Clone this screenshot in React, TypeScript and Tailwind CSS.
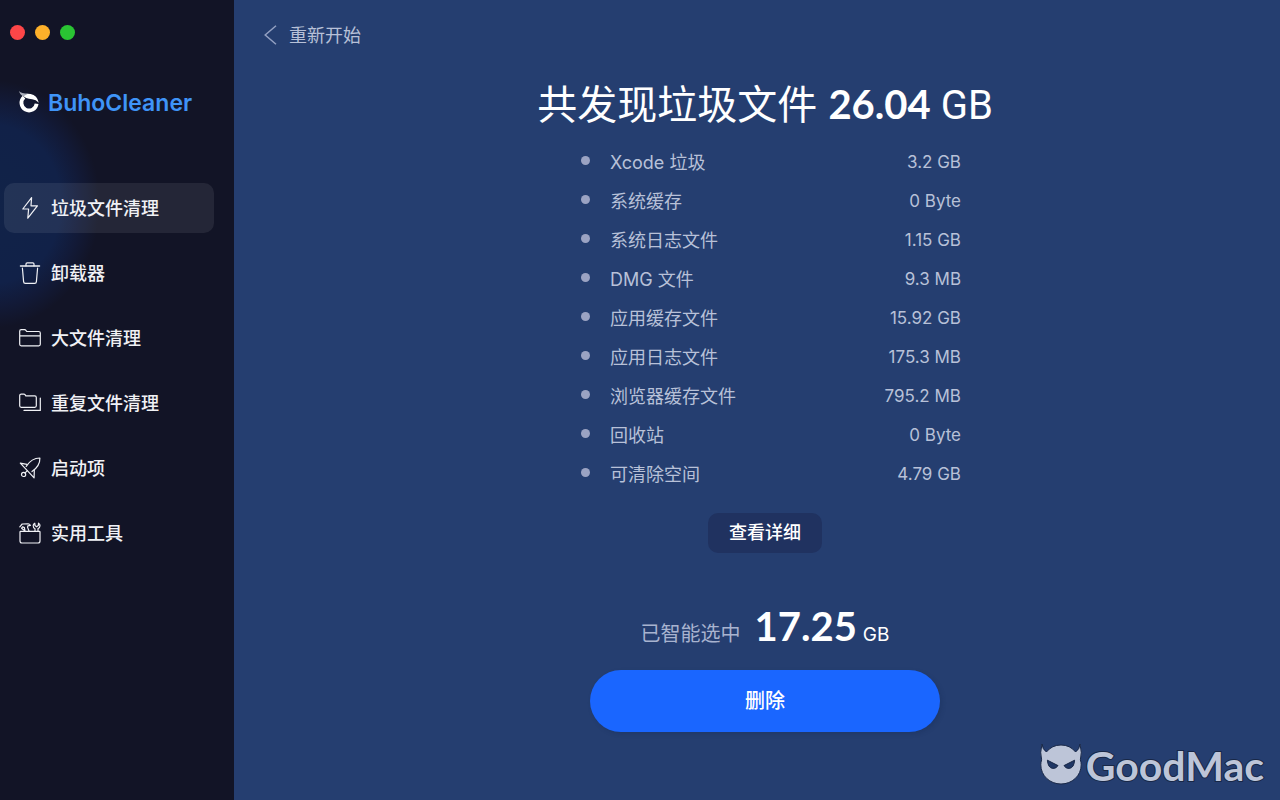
import { ReactNode } from 'react'
import { clsx } from 'clsx'

interface NavItem {
  label: string
  icon: ReactNode
}

interface JunkItem {
  name: string
  size: string
}

interface IconProps {
  children: ReactNode
}

function NavIcon({ children }: IconProps) {
  return (
    <svg
      className="w-6 h-6 shrink-0"
      viewBox="0 0 24 24"
      fill="none"
      stroke="currentColor"
      strokeWidth="1.2"
      strokeLinecap="round"
      strokeLinejoin="round"
      aria-hidden="true"
    >
      {children}
    </svg>
  )
}

const navItems: NavItem[] = [
  {
    label: '垃圾文件清理',
    icon: (
      <NavIcon>
        <path d="M13.6 1.6 4.8 13h5.8l-.8 9.200L19.400 9.800h-6.400z" />
      </NavIcon>
    )
  },
  {
    label: '卸载器',
    icon: (
      <NavIcon>
        <path d="M2.5 5h19" strokeWidth="1.5" />
        <path d="M8 4.800V3q0-1.200 1.200-1.200h5.600Q16 1.800 16 3v1.800M4.400 7l1.200 13.600q.1 1.800 1.800 1.800h9.200q1.700 0 1.800-1.800L19.600 7" />
      </NavIcon>
    )
  },
  {
    label: '大文件清理',
    icon: (
      <NavIcon>
        <path d="M1.7 18.3V5.2Q1.7 3.7 3.2 3.7h3.4q.8 0 1.3.7l.8 1.1h12.1q1.5 0 1.5 1.5v11.3q0 1.5-1.5 1.5H3.2q-1.5 0-1.5-1.5zM1.7 9.8h20.6" />
      </NavIcon>
    )
  },
  {
    label: '重复文件清理',
    icon: (
      <NavIcon>
        <path d="M1.7 14.8V4.6q0-1.5 1.5-1.5h2.6q.8 0 1.2.6l.8 1.2h9q1.5 0 1.5 1.5v8.4q0 1.5-1.5 1.5H3.2q-1.5 0-1.5-1.5zM22.3 7v12.4H6" />
      </NavIcon>
    )
  },
  {
    label: '启动项',
    icon: (
      <NavIcon>
        <path d="M8.2 10.4C11.6 5 15.6 2 21.9 2c.2 6-2.8 10-7.9 13.6" />
        <path d="M9 8.4 2.3 7.2l13.8 14.6.2-7.6" />
        <circle cx="5.6" cy="18.4" r="2.1" />
        <path d="m7.1 16.9 2.3-2.3" />
      </NavIcon>
    )
  },
  {
    label: '实用工具',
    icon: (
      <NavIcon>
        <path d="M2.7 10.3h18.6q.7 0 .7.7v9q0 2-2 2H4q-2 0-2-2v-9q0-.7.7-.7z" />
        <path d="M1.8 5.8 4.2 3l6-.2Q12 3 12.4 4.4l-2.6.4-.2 1.6 1.4 3.6M7 10 6.4 6.6 4.6 5.8l-1 1.4zM17 10V7.8q-2-1-1.8-3.4.2-1.6 1.6-2.2l.2 2.4 1.6 1.2 1.7-1.2.2-2.4q1.6.8 1.5 2.6-.1 2-2 2.8V10" />
      </NavIcon>
    )
  }
]

const junkItems: JunkItem[] = [
  { name: 'Xcode 垃圾', size: '3.2 GB' },
  { name: '系统缓存', size: '0 Byte' },
  { name: '系统日志文件', size: '1.15 GB' },
  { name: 'DMG 文件', size: '9.3 MB' },
  { name: '应用缓存文件', size: '15.92 GB' },
  { name: '应用日志文件', size: '175.3 MB' },
  { name: '浏览器缓存文件', size: '795.2 MB' },
  { name: '回收站', size: '0 Byte' },
  { name: '可清除空间', size: '4.79 GB' }
]

function WindowControls() {
  return (
    <div className="flex gap-[10px] px-[10px] pt-[25px]">
      <button type="button" aria-label="关闭" className="size-[15px] rounded-full bg-[#fd4648]" />
      <button type="button" aria-label="最小化" className="size-[15px] rounded-full bg-[#fdb02a]" />
      <button type="button" aria-label="缩放" className="size-[15px] rounded-full bg-[#2ac433]" />
    </div>
  )
}

function Brand() {
  return (
    <div className="flex items-center gap-2 pl-[18px] mt-[47px] h-8">
      <svg className="w-[22px] h-6" viewBox="0 0 22 24" aria-hidden="true">
        <path d="M6 6.2A7.6 7.6 0 1 0 18.6 12.8" fill="none" stroke="#fff" strokeWidth="3.8" />
        <path d="M3.8 3.8Q8 2.4 12.6 3q6.6 1.2 8.2 8.8-2.8-3.200-6.600-3.600Q7.4 8 3.8 3.8z" fill="#fff" />
        <path d="M.8 0Q3.6 2.8 10 2.8L5 5.6Q2 3.8.8 0z" fill="#a9adb9" />
      </svg>
      <span className="text-[23px] leading-8 font-semibold text-[#3f94f7]">BuhoCleaner</span>
    </div>
  )
}

function Sidebar() {
  return (
    <aside className="w-[234px] shrink-0 bg-[#121426] bg-[radial-gradient(ellipse_108px_124px_at_-8px_204px,#112348_0%,#112148_64%,#121a38_82%,transparent_100%)]">
      <WindowControls />
      <Brand />
      <nav className="flex flex-col gap-[15px] mt-16 pl-1 pr-5">
        {navItems.map((item, index) => (
          <button
            key={item.label}
            type="button"
            aria-current={index === 0 ? 'page' : undefined}
            className={clsx(
              'flex items-center gap-[9px] h-[50px] pl-[14px] rounded-[10px] text-lg font-medium text-[#f0f1f5]',
              index === 0 && 'bg-white/8'
            )}
          >
            {item.icon}
            <span className="pt-0.5">{item.label}</span>
          </button>
        ))}
      </nav>
    </aside>
  )
}

function JunkList() {
  return (
    <ul className="w-[392px] pl-3 mt-[9px]">
      {junkItems.map((item) => (
        <li key={item.name} className="flex items-center h-[39px] text-lg text-[#b8c1d8]">
          <span className="size-[9px] mr-5 mb-1 rounded-full bg-[#9ba3c3]" />
          <span className="flex-1">{item.name}</span>
          <span className="text-[17px]">{item.size}</span>
        </li>
      ))}
    </ul>
  )
}

function Watermark() {
  return (
    <div className="absolute right-4 bottom-[11px] flex items-start gap-1">
      <svg className="w-[42px] h-[42px]" viewBox="0 0 42 42" aria-hidden="true">
        <path
          d="M2 1Q2.400 6.200 6.400 9 12 2 21 2t14.600 7Q39.600 6.200 40 1q2.400 8.800.4 15.800.8 2.600.8 5C41.200 32.800 32 41 21 41S.8 32.800.8 21.800q0-2.400.8-5Q-.4 9.800 2 1z"
          fill="#bdc5d8"
          stroke="#182746"
        />
        <path
          d="M7.4 17.2 18 22.600q-2 3.400-5.400 2.800-4.600-.6-5.200-8.200zM34.600 17.200 24 22.600q2 3.400 5.400 2.800 4.600-.6 5.200-8.200z"
          fill="#203765"
          stroke="#182746"
        />
      </svg>
      <span className="font-[Lato,sans-serif] text-[41px] leading-[46px] font-bold text-[#bdc5d8] [-webkit-text-stroke:2px_#182746] [paint-order:stroke_fill]">
        GoodMac
      </span>
    </div>
  )
}

export default function App() {
  return (
    <div className="relative flex min-h-screen bg-[#253e70] font-[Inter,'Noto_Sans_CJK_SC',sans-serif]">
      <Sidebar />
      <main className="flex-1 flex flex-col">
        <button type="button" className="flex items-center self-start gap-3 ml-[30px] mt-5 h-[30px] text-lg text-[#b8c1d8]">
          <svg className="w-[13px] h-5" viewBox="0 0 13 20" fill="none" stroke="#93a0c2" strokeWidth="1.5" aria-hidden="true">
            <path d="M12 .8 1.200 10 12 19.200" />
          </svg>
          <span className="pt-0.5">重新开始</span>
        </button>

        <div className="flex flex-col items-center pl-4 mt-[26px]">
          <h1 className="text-[40px] leading-[56px] text-white">
            共发现垃圾文件 <strong className="font-[Lato,sans-serif] font-bold">26.04</strong>
            <span className="font-[Roboto,sans-serif]"> GB</span>
          </h1>

          <JunkList />

          <button type="button" className="mt-[19px] h-10 px-[21px] rounded-[10px] bg-[#203260] text-lg font-medium text-white">
            查看详细
          </button>

          <p className="flex items-baseline mt-[45px] leading-[56px] text-white">
            <span className="text-xl leading-[56px] text-[#a8b3cf]">已智能选中</span>
            <strong className="ml-3.5 mr-1.5 font-[Lato,sans-serif] text-[40px] leading-[56px] font-bold">17.25</strong>
            <span className="text-[19px] leading-[56px]">GB</span>
          </p>

          <button
            type="button"
            className="w-[350px] h-[62px] mt-[7px] rounded-full bg-[#1a66ff] text-xl font-medium text-white shadow-[2px_2px_4px_rgba(20,40,80,0.25)]"
          >
            删除
          </button>
        </div>
      </main>
      <Watermark />
    </div>
  )
}
